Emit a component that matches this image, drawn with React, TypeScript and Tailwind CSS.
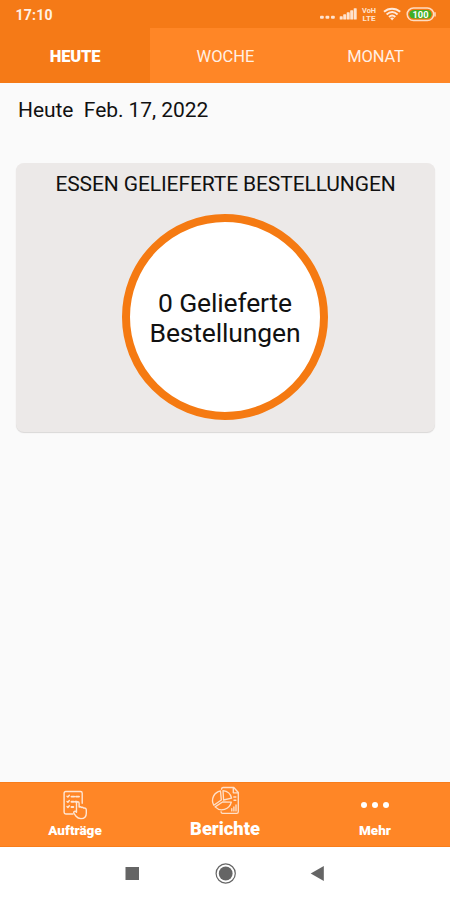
import React from "react";

function StatusIcons() {
  return (
    <svg width="118" height="20" viewBox="0 0 118 20" fill="none">
      <g fill="#ffe3cf">
        <rect x="1" y="11.7" width="3.8" height="3" rx="1" />
        <rect x="6.5" y="11.7" width="3.8" height="3" rx="1" />
        <rect x="12" y="11.7" width="3.8" height="3" rx="1" />
        <rect x="20.7" y="12.2" width="3" height="3.3" rx="0.6" />
        <rect x="24.2" y="10.3" width="3" height="5.2" rx="0.6" />
        <rect x="27.7" y="8.3" width="3" height="7.2" rx="0.6" />
        <rect x="31.2" y="6.3" width="3" height="9.2" rx="0.6" />
        <rect x="34.7" y="4.2" width="3" height="11.3" rx="0.6" />
      </g>
      <g fill="#ffe3cf" fontFamily="Roboto, sans-serif" fontWeight="700">
        <text x="43" y="9.3" fontSize="7" textLength="14" lengthAdjust="spacingAndGlyphs">VoH</text>
        <text x="43.5" y="17.3" fontSize="7" textLength="13" lengthAdjust="spacingAndGlyphs">LTE</text>
      </g>
      <g stroke="#ffe9da" strokeWidth="2">
        <path d="M65 7.8 C69.5 3.6 76.5 3.6 81.2 7.8" />
        <path d="M67.6 10.4 C71 7.5 75.3 7.5 78.6 10.4" />
        <path d="M70 12.9 C72 11.2 74.3 11.2 76.3 12.9" />
      </g>
      <path d="M71.1 14.1 Q73.1 12.8 75.1 14.1 L73.1 16.4Z" fill="#ffe9da" />
      <rect x="88.2" y="4" width="26.5" height="12.6" rx="6.3" stroke="#ffdcc2" strokeWidth="1.5" />
      <rect x="90.4" y="6" width="22.1" height="8.6" rx="4.3" fill="#3fae24" />
      <path d="M116 8.2v4.2" stroke="#ffdcc2" strokeWidth="1.5" />
      <text x="93.5" y="13.7" fill="#fff" fontFamily="Roboto, sans-serif" fontWeight="700" fontSize="9.4" textLength="16" lengthAdjust="spacingAndGlyphs">100</text>
    </svg>
  );
}

function OrdersIcon() {
  return (
    <svg width="26" height="30" viewBox="0 0 26 30" fill="none" stroke="#ffe6d4" strokeWidth="1.4" strokeLinecap="round" strokeLinejoin="round">
      <path d="M11 24H3.8Q2.1 24 2.1 22.3V3.2Q2.1 1.5 3.8 1.5H18.5Q20.2 1.5 20.2 3.2V13.2" />
      <path d="M5 6.2l.9.9 1.4-1.8M5 11.4l.9.9 1.4-1.8M5 16.6l.9.9 1.4-1.8" />
      <path d="M9.5 6.6h2.7M14 6.6h3M9.5 11.8h2M13.2 11.8h1.6M9.5 17h1.8" strokeWidth="1.9" />
      <path d="M14.5 20.8V13.1Q14.5 11.7 15.8 11.7T17.1 13.1V17.1Q18.4 16.2 19.4 17.5Q20.7 16.8 21.6 18.1Q24.3 17.6 24.3 20V23.2Q24.3 28.6 18.9 28.6Q15.9 28.6 14.1 26.3L12 23.4Q11.2 22.1 12.5 21.4Q13.5 20.9 14.5 22.2Z" />
    </svg>
  );
}

function ReportsIcon() {
  return (
    <svg width="30" height="30" viewBox="0 0 30 30" fill="none" stroke="#ffe0c9" strokeWidth="1.35" strokeLinecap="round" strokeLinejoin="round">
      <path d="M11.5 3.2Q11.7 1.5 13.2 1.5H23.8L28.3 6.5V25.7Q28.3 27.3 26.7 27.3H12.6Q11.2 27.3 11 25.8" />
      <path d="M23.3 1.6V6.8H28.1" />
      <path d="M10.5 5A9.6 9.6 0 0 0 3.8 19.2L11.3 14Z" />
      <path d="M13 4.6A9.7 9.7 0 0 1 21.6 12.2L13.6 14Z" />
      <path d="M5.1 20.9A9.6 9.6 0 0 0 21.3 16.2L12.5 16Z" />
      <path d="M23.8 11h2.1M24 14.2h1.9M21.8 24.9v-2.2M23.9 24.9v-4M26 24.9v-6" />
    </svg>
  );
}

export default function App() {
  return (
    <div className="flex h-[900px] w-[450px] flex-col overflow-hidden bg-[#fafafa] font-['Roboto',sans-serif] text-[#111]">
      <header className="flex h-7 shrink-0 items-center justify-between bg-[#f57a17] pl-[15.5px] pr-[13px]">
        <span className="mt-[2px] text-[14px] font-bold leading-5 tracking-[0.25px] text-[#fff0e5]">17:10</span>
        <StatusIcons />
      </header>
      <nav className="grid h-[55px] shrink-0 grid-cols-3 bg-[#ff8626] text-[16.5px] text-[#fff0e5]">
        <button className="bg-[#f57a17] pt-[3px] font-black tracking-[-0.2px] text-white">HEUTE</button>
        <button className="pl-px pt-[3px]">WOCHE</button>
        <button className="pl-px pt-[3px] tracking-[-0.1px]">MONAT</button>
      </nav>
      <main className="flex-1 px-4">
        <div className="flex h-20 gap-[10.5px] pl-[2px] pt-[13px] text-[21px] leading-7 tracking-[-0.07px]">
          <span>Heute</span>
          <span>Feb. 17, 2022</span>
        </div>
        <section className="flex h-[269px] w-[419px] flex-col items-center rounded-[8px] bg-[#ece9e8] pt-[7px] shadow-[0_1px_1px_#d9d7d6]">
          <h1 className="text-[21px] leading-7 tracking-[-0.11px]">ESSEN GELIEFERTE BESTELLUNGEN</h1>
          <div className="mr-px mt-[16px] flex size-[206px] items-center justify-center rounded-full border-[8px] border-[#f57a12] bg-white pt-[2px] text-center text-[26.5px] leading-[30px] tracking-[-0.15px]">
            <p>0 Gelieferte<br />Bestellungen</p>
          </div>
        </section>
      </main>
      <nav className="grid h-[65px] shrink-0 grid-cols-3 border-y border-[#f87d1b] bg-[#ff8626] font-black text-white">
        <button className="flex flex-col items-center pt-[7px] text-[13.5px] leading-4"><OrdersIcon /><span className="mt-[2px]">Aufträge</span></button>
        <button className="flex flex-col items-center pt-[3px] text-[18.3px] leading-5"><ReportsIcon /><span className="mt-[3px]">Berichte</span></button>
        <button className="flex flex-col items-center pt-[19px] text-[13.5px] leading-4">
          <span className="flex h-[6px] gap-[5px]"><i className="size-[6px] rounded-full bg-white" /><i className="size-[6px] rounded-full bg-white" /><i className="size-[6px] rounded-full bg-white" /></span>
          <span className="mt-[14px]">Mehr</span>
        </button>
      </nav>
      <footer className="flex h-[53px] shrink-0 items-center justify-center bg-white">
        <svg width="450" height="53" viewBox="0 0 450 53" fill="#656565">
          <rect x="125.5" y="20" width="13.5" height="13" />
          <circle cx="225.7" cy="26.5" r="9.6" fill="none" stroke="#656565" strokeWidth="1.2" />
          <circle cx="225.7" cy="26.5" r="6.9" />
          <path d="M310.7 26.5L323.8 19v15Z" />
        </svg>
      </footer>
    </div>
  );
}
